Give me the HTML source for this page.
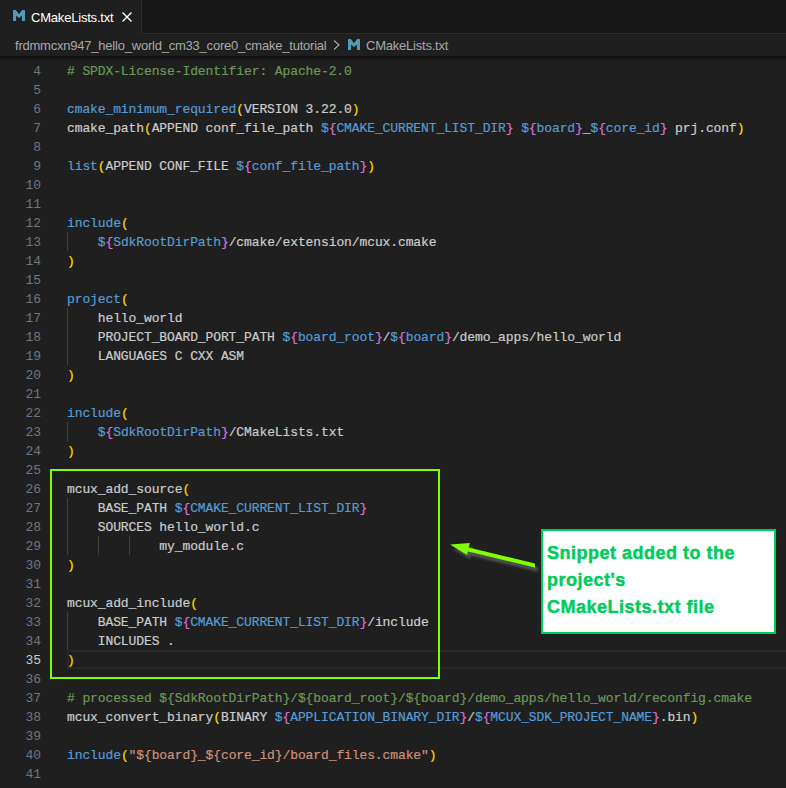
<!DOCTYPE html>
<html><head><meta charset="utf-8">
<style>
html,body{margin:0;padding:0;}
body{width:786px;height:788px;overflow:hidden;background:#1f1f1f;position:relative;font-family:"Liberation Sans",sans-serif;}
.tabs{position:absolute;left:0;top:0;width:786px;height:34px;background:#181818;}
.tabs .bb{position:absolute;left:141px;top:33px;width:645px;height:1px;background:#2b2b2b;}
.tabs .bl{position:absolute;left:141px;top:0;width:1px;height:34px;background:#2b2b2b;}
.tab{position:absolute;left:0;top:0;width:141px;height:34px;background:#1f1f1f;}
.tab .ic{position:absolute;left:13px;top:10px;}
.tab .nm{position:absolute;left:31px;top:10px;font-size:13px;line-height:16px;color:#ffffff;white-space:pre;letter-spacing:-0.2px;}
.tab .x{position:absolute;left:121px;top:12px;}
.bc{position:absolute;left:0;top:34px;width:786px;height:22px;background:#1f1f1f;color:#a9a9a9;font-size:13px;}
.bc span{position:absolute;top:4px;line-height:16px;white-space:pre;letter-spacing:-0.22px;}
.shadow{position:absolute;left:0;top:56px;width:786px;height:6px;box-shadow:#000 0 6px 6px -6px inset;}
.ln{position:absolute;left:0;width:41px;height:19px;line-height:19px;text-align:right;color:#6e7681;font-family:"Liberation Mono",monospace;font-size:13px;letter-spacing:-0.105px;}
.ln.act{color:#cccccc;}
.cl{position:absolute;left:67px;height:19px;line-height:19px;color:#cccccc;font-family:"Liberation Mono",monospace;font-size:13px;white-space:pre;letter-spacing:-0.105px;-webkit-text-stroke:0.2px currentColor;}
.ig{position:absolute;width:1px;height:19px;background:#404040;}
.y{color:#ffd700} .p{color:#da70d6} .b{color:#569cd6} .g{color:#6a9955} .s{color:#ce9178}
.cur{position:absolute;left:67px;top:650px;width:717px;height:15px;border:2px solid #282828;border-right:none;}
.gbox{position:absolute;left:50px;top:469px;width:386px;height:206px;border:2px solid #80ff00;}
.callout{position:absolute;left:541px;top:529px;width:231px;height:101px;background:#fff;border:2px solid #00cc5c;}
.callout div{position:absolute;left:4px;top:9px;color:#00cc5c;font-weight:bold;font-size:18px;line-height:27px;white-space:pre;letter-spacing:0.5px;-webkit-text-stroke:0.45px #00cc5c;}
</style></head><body>
<div class="tabs"><div class="bb"></div><div class="bl"></div>
<div class="tab"><span class="ic"><svg style="display:block" width="12" height="11" viewBox="0 0 12 11"><path d="M0 11V0.4Q0 0 0.5 0H2.8L6 4.2L9.2 0H11.5Q12 0 12 0.4V11H8.9V5.6L6 7.9L3.1 5.6V11Z" fill="#519aba"/></svg></span><span class="nm">CMakeLists.txt</span>
<svg class="x" width="12" height="10" viewBox="0 0 12 10"><path d="M1.5 0.5L10.5 9.5M10.5 0.5L1.5 9.5" stroke="#ffffff" stroke-width="1.4" fill="none"/></svg></div></div>
<div class="bc"><span style="left:15px">frdmmcxn947_hello_world_cm33_core0_cmake_tutorial</span>
<svg style="position:absolute;left:333px;top:5.5px" width="8" height="10" viewBox="0 0 8 10"><path d="M1 0.5L6 5L1 9.5" stroke="#a9a9a9" stroke-width="1.2" fill="none"/></svg>
<span style="left:348px;top:5px"><svg style="display:block" width="12" height="11" viewBox="0 0 12 11"><path d="M0 11V0.4Q0 0 0.5 0H2.8L6 4.2L9.2 0H11.5Q12 0 12 0.4V11H8.9V5.6L6 7.9L3.1 5.6V11Z" fill="#519aba"/></svg></span>
<span style="left:366px">CMakeLists.txt</span></div>
<div class="cur"></div>
<div class="ln" style="top:62px">4</div>
<div class="cl" style="top:62px"><span class="g"># SPDX-License-Identifier: Apache-2.0</span></div>
<div class="ln" style="top:81px">5</div>
<div class="ln" style="top:100px">6</div>
<div class="cl" style="top:100px"><span class="b">cmake_minimum_required</span><span class="y">(</span>VERSION 3.22.0<span class="y">)</span></div>
<div class="ln" style="top:119px">7</div>
<div class="cl" style="top:119px">cmake_path<span class="y">(</span>APPEND conf_file_path <span class="b">$</span><span class="p">{</span><span class="b">CMAKE_CURRENT_LIST_DIR</span><span class="p">}</span> <span class="b">$</span><span class="p">{</span><span class="b">board</span><span class="p">}</span>_<span class="b">$</span><span class="p">{</span><span class="b">core_id</span><span class="p">}</span> prj.conf<span class="y">)</span></div>
<div class="ln" style="top:138px">8</div>
<div class="ln" style="top:157px">9</div>
<div class="cl" style="top:157px"><span class="b">list</span><span class="y">(</span>APPEND CONF_FILE <span class="b">$</span><span class="p">{</span><span class="b">conf_file_path</span><span class="p">}</span><span class="y">)</span></div>
<div class="ln" style="top:176px">10</div>
<div class="ln" style="top:195px">11</div>
<div class="ln" style="top:214px">12</div>
<div class="cl" style="top:214px"><span class="b">include</span><span class="y">(</span></div>
<div class="ln" style="top:233px">13</div>
<div class="ig" style="top:232px;left:67px"></div>
<div class="cl" style="top:233px">    <span class="b">$</span><span class="p">{</span><span class="b">SdkRootDirPath</span><span class="p">}</span>/cmake/extension/mcux.cmake</div>
<div class="ln" style="top:252px">14</div>
<div class="cl" style="top:252px"><span class="y">)</span></div>
<div class="ln" style="top:271px">15</div>
<div class="ln" style="top:290px">16</div>
<div class="cl" style="top:290px"><span class="b">project</span><span class="y">(</span></div>
<div class="ln" style="top:309px">17</div>
<div class="ig" style="top:308px;left:67px"></div>
<div class="cl" style="top:309px">    hello_world</div>
<div class="ln" style="top:328px">18</div>
<div class="ig" style="top:327px;left:67px"></div>
<div class="cl" style="top:328px">    PROJECT_BOARD_PORT_PATH <span class="b">$</span><span class="p">{</span><span class="b">board_root</span><span class="p">}</span>/<span class="b">$</span><span class="p">{</span><span class="b">board</span><span class="p">}</span>/demo_apps/hello_world</div>
<div class="ln" style="top:347px">19</div>
<div class="ig" style="top:346px;left:67px"></div>
<div class="cl" style="top:347px">    LANGUAGES C CXX ASM</div>
<div class="ln" style="top:366px">20</div>
<div class="cl" style="top:366px"><span class="y">)</span></div>
<div class="ln" style="top:385px">21</div>
<div class="ln" style="top:404px">22</div>
<div class="cl" style="top:404px"><span class="b">include</span><span class="y">(</span></div>
<div class="ln" style="top:423px">23</div>
<div class="ig" style="top:422px;left:67px"></div>
<div class="cl" style="top:423px">    <span class="b">$</span><span class="p">{</span><span class="b">SdkRootDirPath</span><span class="p">}</span>/CMakeLists.txt</div>
<div class="ln" style="top:442px">24</div>
<div class="cl" style="top:442px"><span class="y">)</span></div>
<div class="ln" style="top:461px">25</div>
<div class="ln" style="top:480px">26</div>
<div class="cl" style="top:480px">mcux_add_source<span class="y">(</span></div>
<div class="ln" style="top:499px">27</div>
<div class="ig" style="top:498px;left:67px"></div>
<div class="cl" style="top:499px">    BASE_PATH <span class="b">$</span><span class="p">{</span><span class="b">CMAKE_CURRENT_LIST_DIR</span><span class="p">}</span></div>
<div class="ln" style="top:518px">28</div>
<div class="ig" style="top:517px;left:67px"></div>
<div class="cl" style="top:518px">    SOURCES hello_world.c</div>
<div class="ln" style="top:537px">29</div>
<div class="ig" style="top:536px;left:67px"></div>
<div class="ig" style="top:536px;left:98px"></div>
<div class="ig" style="top:536px;left:129px"></div>
<div class="cl" style="top:537px">            my_module.c</div>
<div class="ln" style="top:556px">30</div>
<div class="cl" style="top:556px"><span class="y">)</span></div>
<div class="ln" style="top:575px">31</div>
<div class="ln" style="top:594px">32</div>
<div class="cl" style="top:594px">mcux_add_include<span class="y">(</span></div>
<div class="ln" style="top:613px">33</div>
<div class="ig" style="top:612px;left:67px"></div>
<div class="cl" style="top:613px">    BASE_PATH <span class="b">$</span><span class="p">{</span><span class="b">CMAKE_CURRENT_LIST_DIR</span><span class="p">}</span>/include</div>
<div class="ln" style="top:632px">34</div>
<div class="ig" style="top:631px;left:67px"></div>
<div class="cl" style="top:632px">    INCLUDES .</div>
<div class="ln act" style="top:651px">35</div>
<div class="cl" style="top:651px"><span class="y">)</span></div>
<div class="ln" style="top:670px">36</div>
<div class="ln" style="top:689px">37</div>
<div class="cl" style="top:689px"><span class="g"># processed ${SdkRootDirPath}/${board_root}/${board}/demo_apps/hello_world/reconfig.cmake</span></div>
<div class="ln" style="top:708px">38</div>
<div class="cl" style="top:708px">mcux_convert_binary<span class="y">(</span>BINARY <span class="b">$</span><span class="p">{</span><span class="b">APPLICATION_BINARY_DIR</span><span class="p">}</span>/<span class="b">$</span><span class="p">{</span><span class="b">MCUX_SDK_PROJECT_NAME</span><span class="p">}</span>.bin<span class="y">)</span></div>
<div class="ln" style="top:727px">39</div>
<div class="ln" style="top:746px">40</div>
<div class="cl" style="top:746px"><span class="b">include</span><span class="y">(</span><span class="s">&quot;${board}_${core_id}/board_files.cmake&quot;</span><span class="y">)</span></div>
<div class="ln" style="top:765px">41</div>
<div class="shadow"></div>
<div class="gbox"></div>
<svg style="position:absolute;left:0;top:0" width="786" height="788">
<defs><filter id="sh" x="-20%" y="-50%" width="140%" height="200%"><feGaussianBlur in="SourceAlpha" stdDeviation="1.4"/><feOffset dx="3" dy="3.5" result="o"/><feFlood flood-color="#585858"/><feComposite in2="o" operator="in"/><feMerge><feMergeNode/><feMergeNode in="SourceGraphic"/></feMerge></filter></defs>
<g filter="url(#sh)"><path d="M535 563.6 L535 567.4 L467.6 551.3 L466.9 554.8 L450.1 544.4 L469.9 542.9 L468.5 547.4 Z" fill="#80ff00"/></g>
</svg>
<div class="callout"><div>Snippet added to the
project's
CMakeLists.txt file</div></div>
</body></html>
